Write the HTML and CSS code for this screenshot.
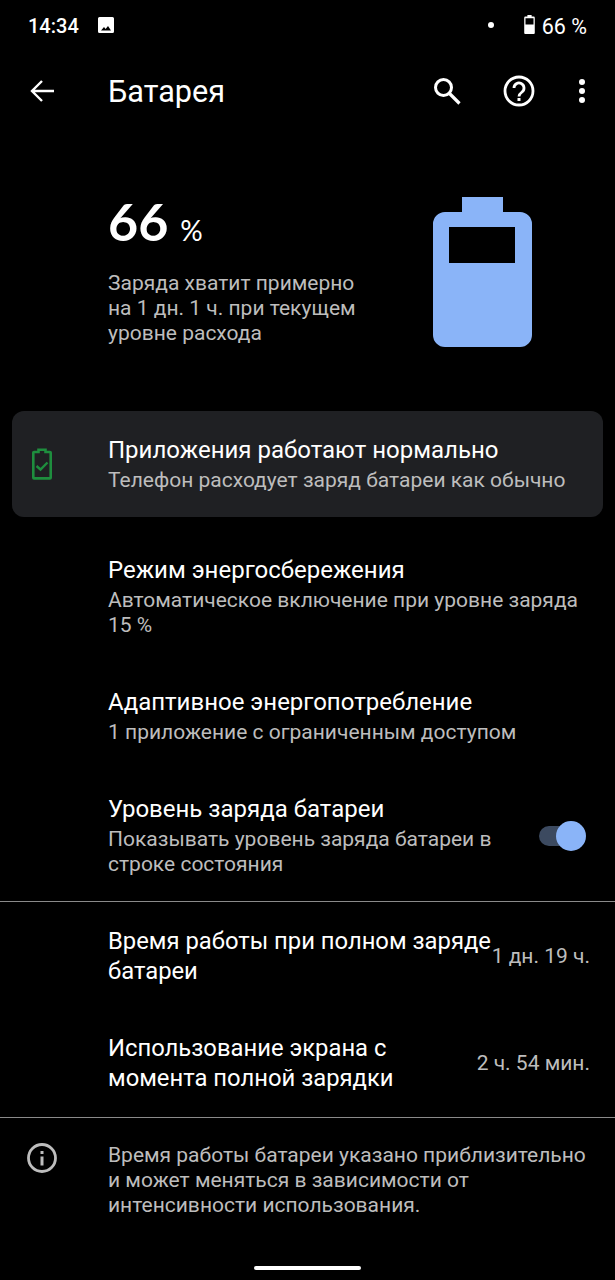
FILE: index.html
```html
<!DOCTYPE html>
<html lang="ru">

<head>
  <meta charset="UTF-8" />
  <meta name="viewport" content="width=device-width, initial-scale=1.0" />
  <title>Батарея</title>
  <link rel="stylesheet" href="styles.css">
</head>

<body>
  <div class="screen">
    <div class="status-bar">
      <span class="clock">14:34</span>
      <svg class="status-image" viewBox="0 0 16 16"><path fill="#fff" fill-rule="evenodd" d="M1.5 0h13A1.5 1.500 0 0 1 16 1.500v13a1.500 1.500 0 0 1-1.500 1.500h-13A1.500 1.500 0 0 1 0 14.500v-13A1.500 1.500 0 0 1 1.500 0zM3 13.500h10l-3-4.500-2.400 3-1.600-2z"/></svg>
      <span class="status-spacer"></span>
      <span class="status-dot"></span>
      <svg class="status-battery" viewBox="0 0 10 18"><path fill="#fff" fill-rule="evenodd" d="M3 0h4v1.500h2a1 1 0 0 1 1 1V17a1 1 0 0 1-1 1H1a1 1 0 0 1-1-1V2.500a1 1 0 0 1 1-1h2zM1.200 3v6h7.600V3z"/></svg>
      <span class="status-percent">66 %</span>
    </div>

    <div class="toolbar">
      <svg class="back-icon" viewBox="0 0 26 24"><path fill="none" stroke="#fff" stroke-width="2.400" d="M25 12H3M13 2 3 12l10 10"/></svg>
      <h1>Батарея</h1>
      <svg class="search-icon" viewBox="0 0 28 28"><circle cx="10.500" cy="10.500" r="8" fill="none" stroke="#fff" stroke-width="3"/><path stroke="#fff" stroke-width="3.200" d="m16 16 10.500 10.500"/></svg>
      <svg class="help-icon" viewBox="0 0 32 32"><circle cx="16" cy="16" r="14" fill="none" stroke="#fff" stroke-width="2.800"/><path fill="none" stroke="#fff" stroke-width="2.800" d="M11 13a5 5 0 1 1 8 4c-2 1.500-3 2.300-3 4.500"/><rect x="14.500" y="23" width="3" height="3" fill="#fff"/></svg>
      <div class="more-icon"><i></i><i></i><i></i></div>
    </div>

    <div class="battery-header">
      <div class="battery-info">
        <div class="battery-level"><span>66</span><small>%</small></div>
        <p>Заряда хватит примерно<br>на 1 дн. 1 ч. при текущем<br>уровне расхода</p>
      </div>
      <svg class="battery-big" viewBox="0 0 99 150"><path fill="#8ab4f8" fill-rule="evenodd" d="M29 0h41v15h17a12 12 0 0 1 12 12v111a12 12 0 0 1-12 12H12a12 12 0 0 1-12-12V27a12 12 0 0 1 12-12h17zM16 30v36h66V30z"/></svg>
    </div>

    <div class="status-card">
      <svg class="card-icon" viewBox="0 0 20 32"><path fill="none" stroke="#1e8e3e" stroke-width="2.600" d="M6.500 4V1.800h7V4H18a.7.7 0 0 1 .7.700v25a.7.7 0 0 1-.7.700H2a.7.7 0 0 1-.7-.7v-25A.7.7 0 0 1 2 4z"/><path fill="none" stroke="#1e8e3e" stroke-width="2.400" d="m4.500 18 4 3.500 7-7"/></svg>
      <div class="row-text">
        <div class="row-title">Приложения работают нормально</div>
        <div class="row-sub">Телефон расходует заряд батареи как обычно</div>
      </div>
    </div>

    <div class="row row-saver">
      <div class="row-text">
        <div class="row-title">Режим энергосбережения</div>
        <div class="row-sub">Автоматическое включение при уровне заряда<br>15 %</div>
      </div>
    </div>

    <div class="row row-adaptive">
      <div class="row-text">
        <div class="row-title">Адаптивное энергопотребление</div>
        <div class="row-sub">1 приложение с ограниченным доступом</div>
      </div>
    </div>

    <div class="row row-level">
      <div class="row-text">
        <div class="row-title">Уровень заряда батареи</div>
        <div class="row-sub">Показывать уровень заряда батареи в<br>строке состояния</div>
      </div>
      <div class="switch"><span class="switch-track"></span><span class="switch-thumb"></span></div>
    </div>

    <div class="stats">
      <div class="stat stat-full">
        <div class="stat-label">Время работы при полном заряде<br>батареи</div>
        <div class="stat-value">1 дн. 19 ч.</div>
      </div>
      <div class="stat stat-screen">
        <div class="stat-label">Использование экрана с<br>момента полной зарядки</div>
        <div class="stat-value">2 ч. 54 мин.</div>
      </div>
    </div>

    <div class="footer-note">
      <svg class="info-icon" viewBox="0 0 30 30"><circle cx="15" cy="15" r="13.500" fill="none" stroke="#bdbdbd" stroke-width="2.800"/><rect x="13.500" y="13.500" width="3" height="9" fill="#bdbdbd"/><rect x="13.500" y="8" width="3" height="3" fill="#bdbdbd"/></svg>
      <p>Время работы батареи указано приблизительно<br>и может меняться в зависимости от<br>интенсивности использования.</p>
    </div>

    <div class="home-bar"></div>
  </div>
</body>

</html>
```

FILE: styles.css
```css
body {
  margin: 0;
  background-color: #000;
  color: #fff;
  font-family: Roboto, "Noto Sans", sans-serif;
}

.screen {
  position: relative;
  width: 615px;
  height: 1280px;
  overflow: hidden;
}

/* status bar */
.status-bar {
  display: flex;
  align-items: center;
  height: 52px;
  padding: 0 28px;
  font-size: 20px;
  font-weight: 500;
}

.status-image {
  width: 16px;
  height: 16px;
  margin-left: 19px;
  margin-bottom: 2px;
}

.status-spacer {
  flex: 1;
}

.status-dot {
  width: 6px;
  height: 6px;
  margin-bottom: 3px;
  border-radius: 50%;
  background-color: #fff;
}

.status-battery {
  width: 11px;
  height: 19px;
  margin-left: 30px;
  margin-bottom: 3px;
}

.status-percent {
  margin-left: 7px;
  font-size: 21.500px;
  font-weight: 400;
}

/* toolbar */
.toolbar {
  display: flex;
  align-items: center;
  height: 78px;
  padding-left: 29px;
  padding-bottom: 2px;
}

.toolbar h1 {
  flex: 1;
  margin: 0 0 0 53px;
  font-size: 30.600px;
  font-weight: 400;
}

.back-icon {
  width: 26px;
  height: 24px;
}

.search-icon {
  width: 28px;
  height: 28px;
}

.help-icon {
  width: 32px;
  height: 32px;
  margin-left: 42px;
}

.more-icon {
  display: flex;
  flex-direction: column;
  gap: 3px;
  margin-left: 44px;
  margin-right: 30px;
}

.more-icon i {
  width: 6px;
  height: 6px;
  border-radius: 50%;
  background-color: #fff;
}

/* battery header */
.battery-header {
  display: flex;
  justify-content: space-between;
  padding: 61px 83px 0 108px;
  height: 279px;
  box-sizing: border-box;
}

.battery-level {
  display: flex;
  align-items: baseline;
  gap: 12px;
  font-family: Lato, Roboto, sans-serif;
  font-size: 52px;
  font-weight: 700;
  line-height: 56px;
}

.battery-level small {
  font-size: 28px;
  font-weight: 400;
}

.battery-info p {
  margin: 13px 0 0;
  font-size: 21px;
  line-height: 25px;
  color: #bdbdbd;
}

.battery-big {
  width: 99px;
  height: 150px;
  margin-top: 4px;
}

/* rows */
.status-card {
  display: flex;
  align-items: center;
  height: 106px;
  margin: 0 12px;
  padding-left: 20px;
  border-radius: 12px;
  background-color: #1f2023;
  box-sizing: border-box;
}

.card-icon {
  width: 20px;
  height: 32px;
  margin-right: 56px;
}

.row-title {
  font-size: 24px;
  line-height: 30px;
}

.row-sub {
  margin-top: 3px;
  font-size: 21px;
  line-height: 25px;
  color: #bdbdbd;
}

.row {
  display: flex;
  align-items: center;
  padding-left: 108px;
}

.row-saver {
  margin-top: 38px;
}

.row-adaptive {
  margin-top: 49px;
}

.row-level {
  margin-top: 49px;
}

.switch {
  position: relative;
  width: 47px;
  height: 30px;
  margin-left: auto;
  margin-right: 29px;
}

.switch-track {
  position: absolute;
  left: 0;
  top: 5px;
  width: 40px;
  height: 20px;
  border-radius: 10px;
  background-color: #3c4a60;
}

.switch-thumb {
  position: absolute;
  right: 0;
  top: 0;
  width: 30px;
  height: 30px;
  border-radius: 50%;
  background-color: #8ab4f8;
}

/* stats */
.stats {
  margin-top: 24px;
  height: 217px;
  box-sizing: border-box;
  border-top: 1px solid #8a8a8a;
  border-bottom: 1px solid #8a8a8a;
}

.stat {
  display: flex;
  align-items: center;
  justify-content: space-between;
  padding: 0 25px 0 108px;
  font-size: 23.800px;
  line-height: 30px;
}

.stat-full {
  margin-top: 24px;
}

.stat-screen {
  margin-top: 47px;
}

.stat-label {
  white-space: nowrap;
}

.stat-value {
  font-size: 21px;
  color: #bdbdbd;
  white-space: nowrap;
}

/* footer */
.footer-note {
  display: flex;
  padding: 25px 0 0 27px;
}

.info-icon {
  width: 30px;
  height: 30px;
  margin-right: 51px;
}

.footer-note p {
  margin: 0;
  font-size: 21px;
  line-height: 25px;
  color: #bdbdbd;
}

.home-bar {
  position: absolute;
  left: 254px;
  bottom: 10px;
  width: 107px;
  height: 4px;
  border-radius: 2px;
  background-color: #fff;
}
```
